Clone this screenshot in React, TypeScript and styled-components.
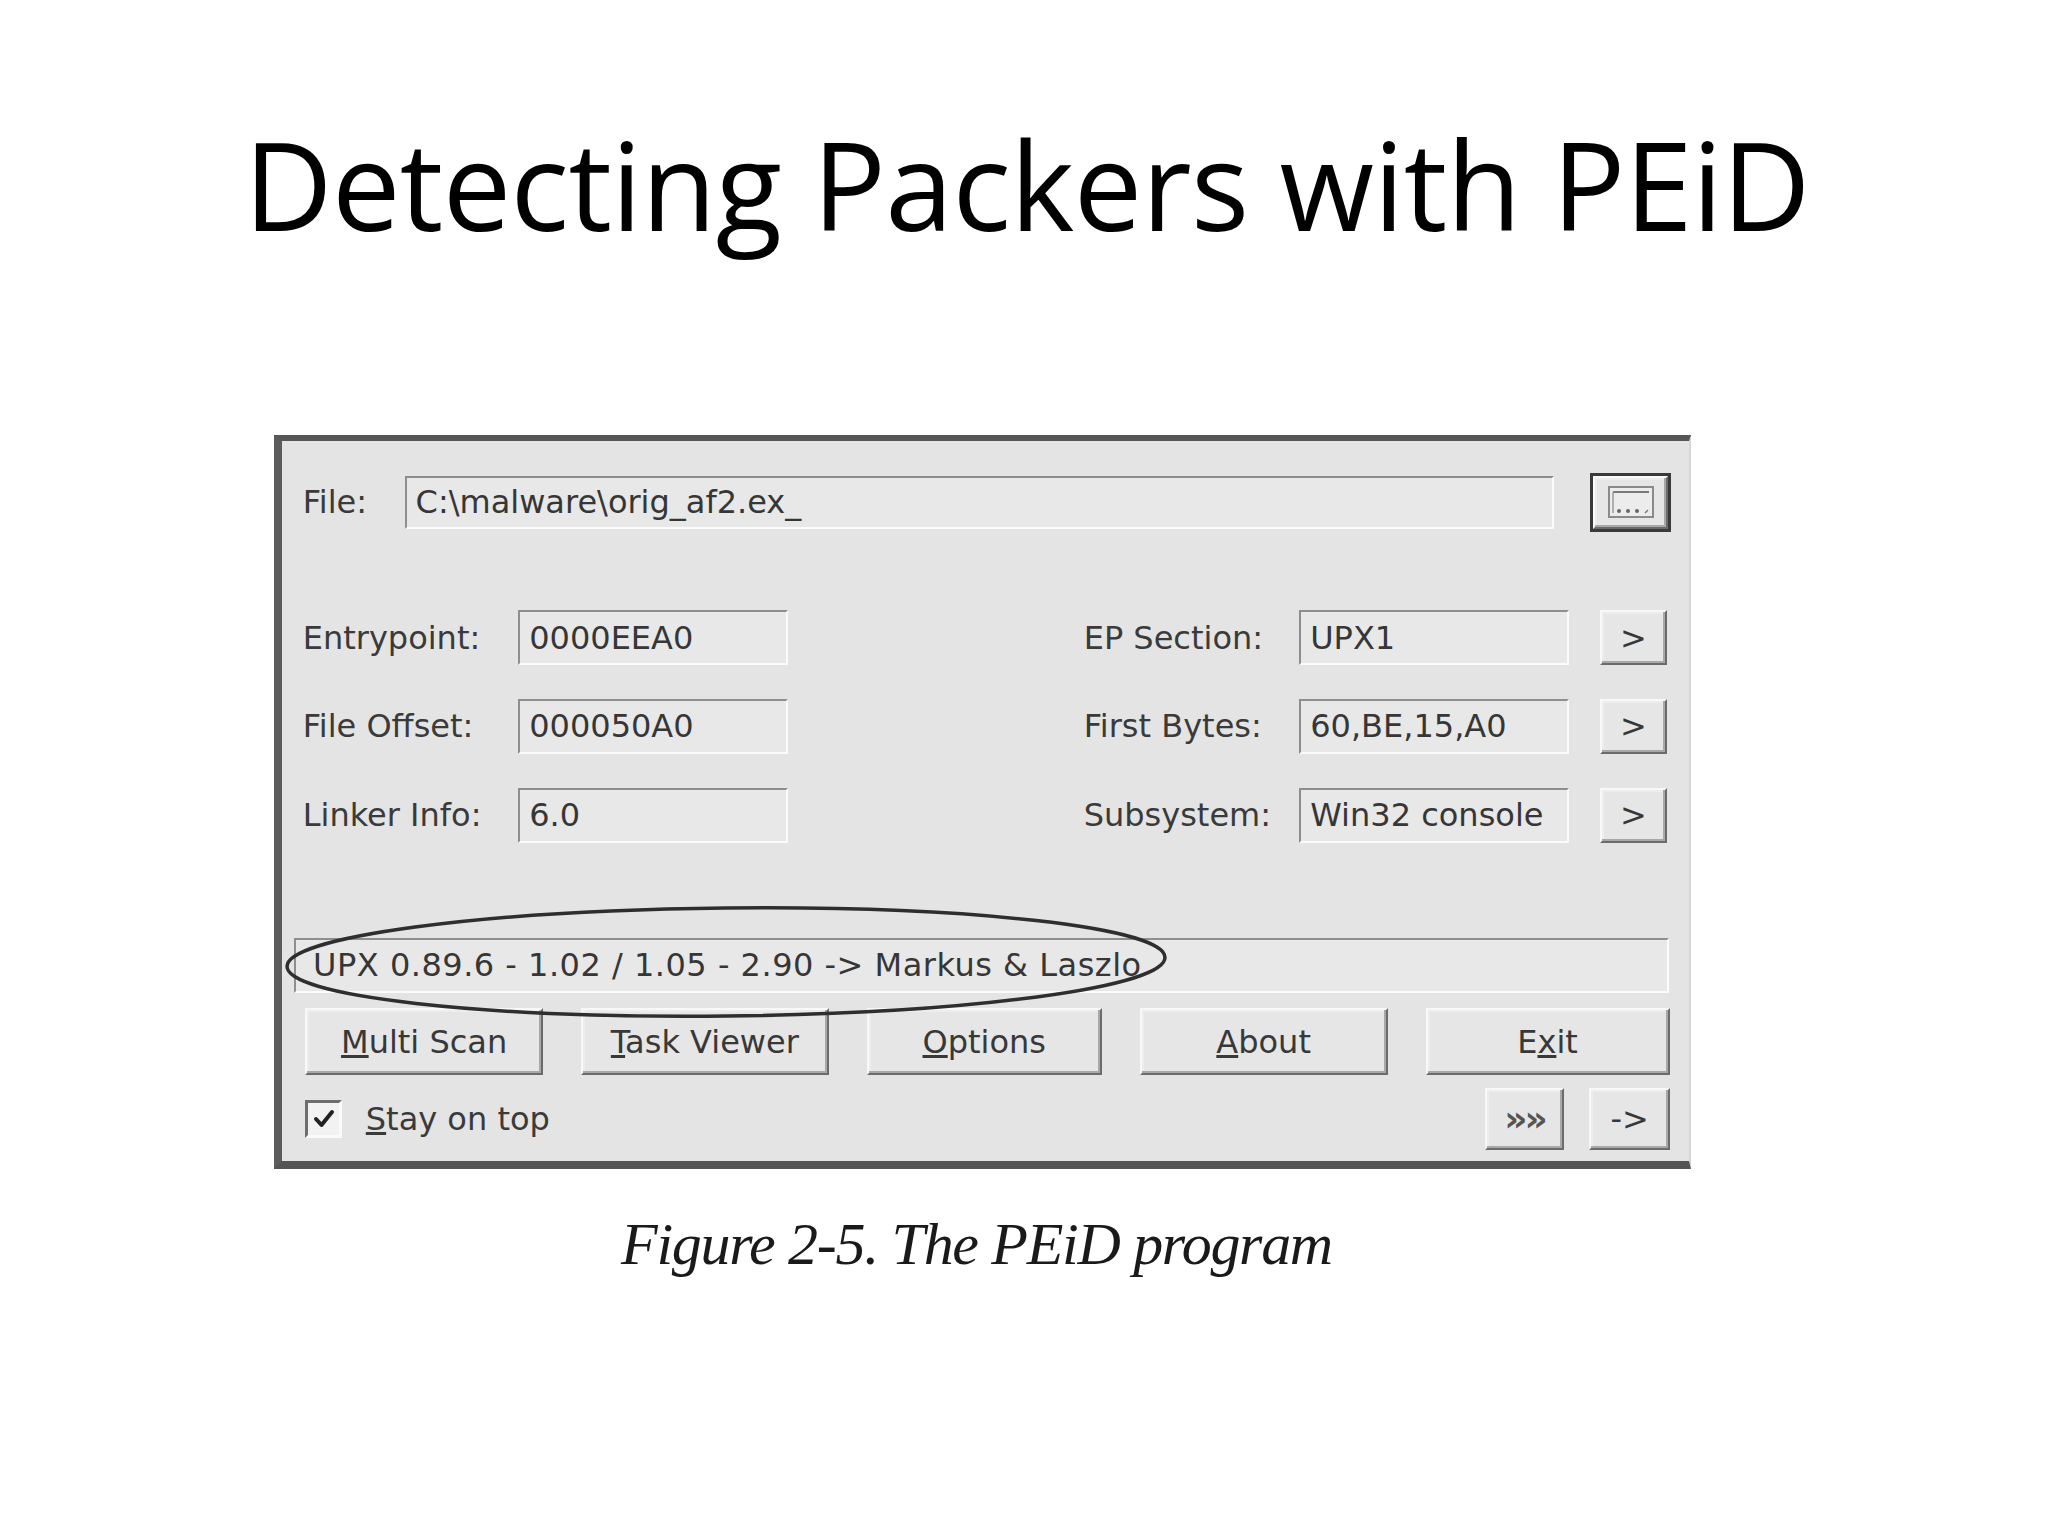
import React from "react";
import styled, { createGlobalStyle } from "styled-components";

const GlobalStyle = createGlobalStyle`
  html, body { margin: 0; padding: 0; background: #ffffff; }
  #root { width: 2048px; height: 1536px; }
`;

const Slide = styled.div`
  width: 2048px;
  height: 1536px;
  background: #ffffff;
  display: flex;
  flex-direction: column;
  overflow: hidden;
`;

const Title = styled.h1`
  margin: 123px 0 0 0;
  padding-left: 6px;
  font-family: "Open Sans", "DejaVu Sans", sans-serif;
  font-weight: 400;
  font-size: 122px;
  line-height: 122px;
  text-align: center;
  color: #000000;
  letter-spacing: -0.6px;
`;

const Window = styled.div`
  position: relative;
  margin: 190px 0 0 274px;
  width: 1417px;
  height: 734px;
  box-sizing: border-box;
  background: #e4e4e4;
  border-style: solid;
  border-width: 6px 2px 8px 8px;
  border-color: #565656 #d6d6d6 #545454 #5c5c5c;
  padding: 31.8px 17.6px 0 11.6px;
  display: flex;
  flex-direction: column;
  font-family: "DejaVu Sans", "Liberation Sans", sans-serif;
  font-size: 32px;
  color: #383838;
`;

const FileRow = styled.div`
  display: flex;
  align-items: center;
  height: 59px;
`;

const Label = styled.span<{ $w?: number }>`
  box-sizing: border-box;
  width: ${(p) => (p.$w ? `${p.$w}px` : "auto")};
  padding-left: ${(p) => (p.$w ? "9.1px" : "0")};
  white-space: nowrap;
  color: #3a3a3a;
`;

const Field = styled.div<{ $grow?: boolean }>`
  box-sizing: border-box;
  height: 55px;
  display: flex;
  align-items: center;
  background: #e8e8e8;
  border: 2px solid;
  border-color: #8e8e8e #fbfbfb #fbfbfb #8e8e8e;
  padding-left: 9px;
  white-space: nowrap;
  overflow: hidden;
  color: #363636;
  ${(p) => (p.$grow ? "flex: 1; height: 53.6px;" : "")}
`;

const RaisedButton = styled.button<{ $default?: boolean }>`
  box-sizing: border-box;
  height: 100%;
  margin: 0;
  padding: 0;
  font: inherit;
  color: #383838;
  background: #e6e6e6;
  border: 2px solid;
  border-color: #f8f8f8 #6b6b6b #6b6b6b #f8f8f8;
  box-shadow: inset -2px -2px 0 #a8a8a8, inset 2px 2px 0 #ededed;
  display: flex;
  align-items: center;
  justify-content: center;
  ${(p) =>
    p.$default
      ? `outline: 3px solid #3a3a3a; outline-offset: -3px; border-width: 5px; border-color: #fafafa #6b6b6b #6b6b6b #fafafa;`
      : ""}
`;

const BrowseButton = styled(RaisedButton)`
  width: 81px;
  height: 59px;
  margin-left: 36.6px;
`;

const InfoGrid = styled.div`
  margin-top: 78.4px;
  padding-left: 9.1px;
  display: grid;
  grid-template-columns: 215.5px 270.3px 295.2px 215.5px 270.3px 30.1px 67.9px;
  grid-auto-rows: 55px;
  row-gap: 33.8px;
  align-items: center;
`;

const GridLabel = styled.span<{ $col: number }>`
  grid-column: ${(p) => p.$col};
  white-space: nowrap;
  color: #3a3a3a;
`;

const GridField = styled(Field)<{ $col: number }>`
  grid-column: ${(p) => p.$col};
`;

const ArrowButton = styled(RaisedButton)`
  grid-column: 7;
  height: 55px;
`;

const ResultField = styled(Field)`
  margin-top: 95.2px;
  margin-right: 2.6px;
  padding-left: 17.5px;
  letter-spacing: 0.5px;
`;

const ButtonRow = styled.div`
  margin-top: 15.5px;
  height: 66.6px;
  padding-left: 11.7px;
  display: grid;
  grid-template-columns: 237.7px 248px 235px 248px 244px;
  column-gap: 37.9px;
`;

const BottomRow = styled.div`
  margin-top: 13.1px;
  height: 61.4px;
  padding-left: 11.7px;
  display: flex;
  align-items: center;
`;

const CheckBox = styled.span`
  box-sizing: border-box;
  width: 37px;
  height: 38px;
  background: #f2f2f2;
  border: 3px solid;
  border-color: #6e6e6e #fafafa #fafafa #6e6e6e;
  display: flex;
  align-items: center;
  justify-content: center;
`;

const CheckLabel = styled.span`
  margin-left: 23.5px;
  color: #3a3a3a;
`;

const SmallButton = styled(RaisedButton)<{ $first?: boolean }>`
  width: ${(p) => (p.$first ? "79.6px" : "81px")};
  height: 61.4px;
  margin-left: ${(p) => (p.$first ? "auto" : "24.8px")};
  margin-right: ${(p) => (p.$first ? "0" : "1.3px")};
`;

const Chevrons = styled.span`
  font-size: 36px;
  font-weight: 700;
  letter-spacing: -3px;
  color: #555;
`;

const EllipseOverlay = styled.svg`
  position: absolute;
  left: 2.4px;
  top: 464px;
  width: 884px;
  height: 114px;
  pointer-events: none;
  z-index: 2;
  overflow: visible;
`;

const Caption = styled.div`
  margin: 45px 0 0 274px;
  width: 1417px;
  padding-right: 12px;
  box-sizing: border-box;
  text-align: center;
  font-family: "Liberation Serif", "DejaVu Serif", serif;
  font-style: italic;
  font-size: 60px;
  line-height: 60px;
  letter-spacing: -1.3px;
  color: #1a1a1a;
`;

const BrowseIcon = () => (
  <svg width="48" height="34" viewBox="0 0 48 34">
    <rect x="2" y="2" width="44" height="30" fill="#ececec" stroke="#8a8a8a" strokeWidth="2" />
    <line x1="6" y1="7" x2="42" y2="7" stroke="#7a7a7a" strokeWidth="2" />
    <line x1="6" y1="7" x2="6" y2="28" stroke="#9a9a9a" strokeWidth="1.5" />
    <circle cx="12" cy="26" r="2" fill="#666" />
    <circle cx="21" cy="26" r="2" fill="#666" />
    <circle cx="30" cy="26" r="2" fill="#666" />
    <line x1="38" y1="28" x2="41" y2="25" stroke="#777" strokeWidth="1.5" />
  </svg>
);

const CheckMark = () => (
  <svg width="24" height="24" viewBox="0 0 24 24">
    <path d="M4 12 L9.5 18 L20 5" fill="none" stroke="#222" strokeWidth="4" strokeLinecap="round" strokeLinejoin="round" />
  </svg>
);

const infoRows = [
  { l: "Entrypoint:", v: "0000EEA0", r: "EP Section:", rv: "UPX1" },
  { l: "File Offset:", v: "000050A0", r: "First Bytes:", rv: "60,BE,15,A0" },
  { l: "Linker Info:", v: "6.0", r: "Subsystem:", rv: "Win32 console" },
];

export default function App() {
  return (
    <>
      <GlobalStyle />
      <Slide>
        <Title>Detecting Packers with PEiD</Title>
        <Window>
          <FileRow>
            <Label $w={111}>File:</Label>
            <Field $grow>C:\malware\orig_af2.ex_</Field>
            <BrowseButton $default>
              <BrowseIcon />
            </BrowseButton>
          </FileRow>

          <InfoGrid>
            {infoRows.map((row) => (
              <React.Fragment key={row.l}>
                <GridLabel $col={1}>{row.l}</GridLabel>
                <GridField $col={2}>{row.v}</GridField>
                <GridLabel $col={4}>{row.r}</GridLabel>
                <GridField $col={5}>{row.rv}</GridField>
                <ArrowButton>&gt;</ArrowButton>
              </React.Fragment>
            ))}
          </InfoGrid>

          <ResultField>UPX 0.89.6 - 1.02 / 1.05 - 2.90 -&gt; Markus &amp; Laszlo</ResultField>

          <ButtonRow>
            <RaisedButton>
              <span><u>M</u>ulti Scan</span>
            </RaisedButton>
            <RaisedButton>
              <span><u>T</u>ask Viewer</span>
            </RaisedButton>
            <RaisedButton>
              <span><u>O</u>ptions</span>
            </RaisedButton>
            <RaisedButton>
              <span><u>A</u>bout</span>
            </RaisedButton>
            <RaisedButton>
              <span>E<u>x</u>it</span>
            </RaisedButton>
          </ButtonRow>

          <BottomRow>
            <CheckBox>
              <CheckMark />
            </CheckBox>
            <CheckLabel>
              <u>S</u>tay on top
            </CheckLabel>
            <SmallButton $first>
              <Chevrons>»»</Chevrons>
            </SmallButton>
            <SmallButton>-&gt;</SmallButton>
          </BottomRow>

          <EllipseOverlay viewBox="0 0 884 114">
            <ellipse cx="442" cy="57" rx="439" ry="54" fill="none" stroke="#2e2e2e" strokeWidth="3.5" transform="rotate(-0.6 442 57)" />
          </EllipseOverlay>
        </Window>
        <Caption>Figure 2-5. The PEiD program</Caption>
      </Slide>
    </>
  );
}
